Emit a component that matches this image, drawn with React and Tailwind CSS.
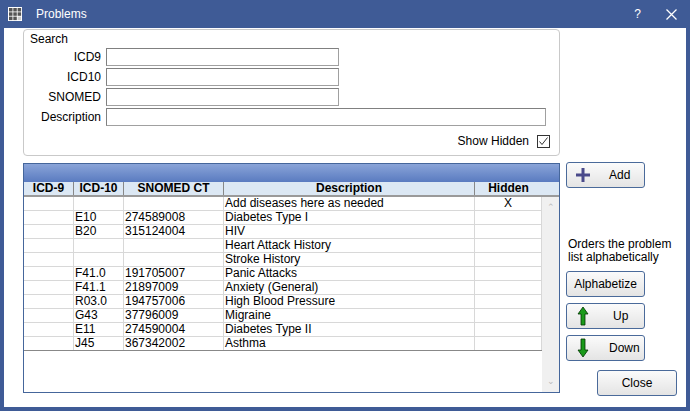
import React from "react";

const rows = [
  ["", "", "", "Add diseases here as needed", "X"],
  ["", "E10", "274589008", "Diabetes Type I", ""],
  ["", "B20", "315124004", "HIV", ""],
  ["", "", "", "Heart Attack History", ""],
  ["", "", "", "Stroke History", ""],
  ["", "F41.0", "191705007", "Panic Attacks", ""],
  ["", "F41.1", "21897009", "Anxiety (General)", ""],
  ["", "R03.0", "194757006", "High Blood Pressure", ""],
  ["", "G43", "37796009", "Migraine", ""],
  ["", "E11", "274590004", "Diabetes Type II", ""],
  ["", "J45", "367342002", "Asthma", ""],
];
const widths = ["w-[50px]", "w-[50px]", "w-[100px]", "w-[251px]", "w-[67px]"];

function Btn({ children, className = "" }) {
  return (
    <div className={"border border-[#4a6a9a] rounded-[3px] bg-gradient-to-b from-[#fbfbfb] to-[#e4e4e4] flex items-center text-[12px] " + className}>
      {children}
    </div>
  );
}

export default function App() {
  const F = { fontFamily: '"Liberation Sans", Arial, sans-serif' };
  return (
    <div style={F} className="w-[690px] h-[411px] bg-[#3f5b96] flex flex-col text-[12px] text-black overflow-hidden">
      <div className="h-[28px] flex items-center text-white text-[12px] px-[8px] shrink-0">
        <svg width="14" height="14" viewBox="0 0 14 14" className="mr-[14px]">
          <rect x="0" y="0" width="14" height="14" fill="#fff" />
          {[0, 1, 2].map(r => [0, 1, 2].map(c => (
            <rect key={r + "" + c} x={1 + c * 4.3} y={1 + r * 4.3} width="3.5" height="3.5" fill={r === 2 && c === 2 ? "#ccc" : "#555"} />
          )))}
        </svg>
        <span>Problems</span>
        <span className="ml-auto mr-[25px]">?</span>
        <svg width="11" height="11" viewBox="0 0 11 11" className="mr-[5px]"><path d="M0.5 0.5L10.5 10.5M10.5 0.5L0.5 10.5" stroke="#fff" strokeWidth="1.3" /></svg>
      </div>
      <div className="flex-1 mx-[4px] mb-[4px] bg-white flex pl-[19px] pt-[1px] relative">
        <div className="flex flex-col w-[537px]">
          <div className="h-[127px] border border-[#c9c9c9] rounded-[4px] relative">
            <div className="absolute left-[6px] top-[0px] text-[12px]">Search</div>
            <div className="flex flex-col gap-[2px] mt-[18px]">
              {[["ICD9", 233], ["ICD10", 233], ["SNOMED", 233], ["Description", 440]].map(([l, w]) => (
                <div key={l} className="flex items-center">
                  <div className="w-[82px] text-right pr-[5px]">{l}</div>
                  <div style={{ width: w }} className="h-[18px] border border-[#a0a0a0] border-t-[#808080] border-l-[#808080] bg-white" />
                </div>
              ))}
            </div>
            <div className="absolute right-[9px] bottom-[5px] flex items-center gap-[8px]">
              <span>Show Hidden</span>
              <div className="w-[13px] h-[13px] border border-[#333] flex items-center justify-center">
                <svg width="11" height="11" viewBox="0 0 11 11"><path d="M1.5 5.5L4 8.5L9.5 1.5" stroke="#333" strokeWidth="1" fill="none" /></svg>
              </div>
            </div>
          </div>
          <div className="mt-[7px] h-[230px] border border-[#45669b] flex flex-col">
            <div className="h-[18px] bg-gradient-to-b from-[#8aa4d8] to-[#5a7bc0] shrink-0" />
            <div className="h-[15px] bg-[#dce8f4] border-b-2 border-b-[#9a9a9a] flex font-bold text-[12px] shrink-0">
              {["ICD-9", "ICD-10", "SNOMED CT", "Description", "Hidden"].map((h, i) => (
                <div key={h} className={widths[i] + " text-center leading-[13px] " + (i < 4 ? "border-r border-r-[#888]" : "")}>{h}</div>
              ))}
            </div>
            <div className="flex flex-1">
              <div className="w-[518px]">
                {rows.map((r, ri) => (
                  <div key={ri} className="flex h-[14px] border-b border-b-[#d8d8d8] leading-[13px]">
                    {r.map((c, i) => (
                      <div key={i} className={widths[i] + " px-[1px] border-r border-r-[#d8d8d8] whitespace-nowrap overflow-hidden " + (i === 4 ? "text-center" : "")}>{c}</div>
                    ))}
                  </div>
                ))}
                <div className="w-[518px] h-0 border-t border-t-[#888] -mt-[1px]" />
              </div>
              <div className="w-[17px] bg-[#f0f0f0] flex flex-col items-center justify-between py-[4px] text-[#bbb] text-[9px]">
                <span>⌃</span><span>⌄</span>
              </div>
            </div>
          </div>
        </div>
        <div className="flex flex-col ml-[6px] pt-[133px]">
          <Btn className="w-[79px] h-[26px]">
            <svg width="16" height="16" viewBox="0 0 16 16" className="ml-[8px]"><path d="M8 1V15M1 8H15" stroke="#4a4a8a" strokeWidth="3" /></svg>
            <span className="ml-[18px]">Add</span>
          </Btn>
          <div className="mt-[50px] leading-[13px] w-[120px] ml-[2px]">Orders the problem list alphabetically</div>
          <Btn className="w-[79px] h-[26px] mt-[7px] justify-center">Alphabetize</Btn>
          <Btn className="w-[79px] h-[26px] mt-[6px]">
            <svg width="12" height="20" viewBox="0 0 12 20" className="ml-[10px]"><path d="M6 1L11 8H8V19H4V8H1Z" fill="#1a9a1a" stroke="#003300" strokeWidth="0.8" /></svg>
            <span className="ml-[24px]">Up</span>
          </Btn>
          <Btn className="w-[79px] h-[26px] mt-[6px]">
            <svg width="12" height="20" viewBox="0 0 12 20" className="ml-[10px]"><path d="M6 19L11 12H8V1H4V12H1Z" fill="#1a9a1a" stroke="#003300" strokeWidth="0.8" /></svg>
            <span className="ml-[20px]">Down</span>
          </Btn>
          <Btn className="w-[80px] h-[26px] mt-[9px] ml-[31px] justify-center">Close</Btn>
        </div>
      </div>
    </div>
  );
}
